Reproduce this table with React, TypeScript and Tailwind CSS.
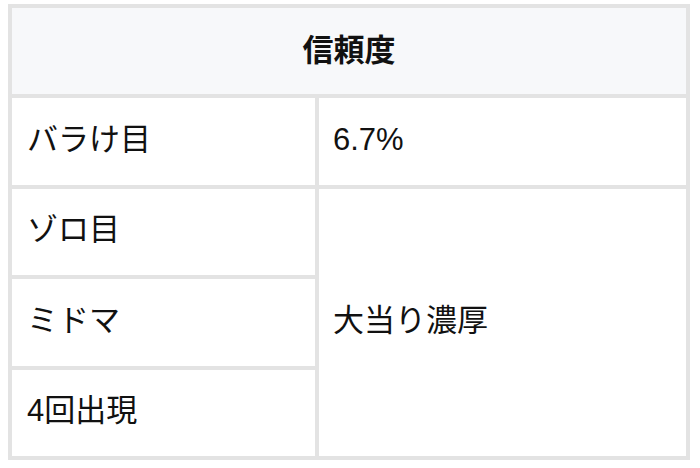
const FONT = "font-['Liberation_Sans','Noto_Sans_CJK_JP',sans-serif]";

export default function App() {
  return (
    <main className={`min-h-screen bg-white pt-[4px] pl-[8px] text-[31px] text-[#111111] ${FONT}`}>
      <div className="grid w-[682px] grid-cols-[303px_367px] grid-rows-[86px_87px_86px_87px_86px] gap-[4px] bg-[#e3e3e3] p-[4px]">
        <div className="col-span-2 flex items-center justify-center bg-[#f7f8fa] font-bold">信頼度</div>
        <div className="flex items-center bg-white px-[15px] pb-[3px]">バラけ目</div>
        <div className="flex items-center bg-white px-[14px] pb-[3px]">6.7%</div>
        <div className="flex items-center bg-white px-[15px] pb-[3px]">ゾロ目</div>
        <div className="row-span-3 flex items-center bg-white px-[14px] pb-[3px]">大当り濃厚</div>
        <div className="flex items-center bg-white px-[15px] pb-[3px]">ミドマ</div>
        <div className="flex items-center bg-white px-[15px] pb-[3px]">4回出現</div>
      </div>
    </main>
  );
}
